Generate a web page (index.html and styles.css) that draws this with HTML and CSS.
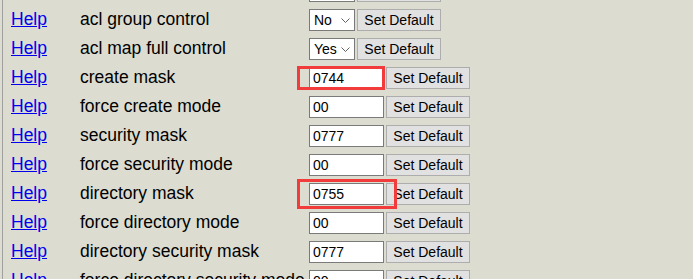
FILE: index.html
```html
<!DOCTYPE html>
<html lang="en">

<head>
  <meta charset="UTF-8" />
  <title>Share Parameters</title>
  <link rel="stylesheet" href="styles.css">
</head>

<body>
  <div class="frame">
    <table class="params">
      <tr>
        <td class="help"></td>
        <td class="name"></td>
        <td class="ctl">
          <span class="dd">
            <select class="pick"><option>Yes</option><option>No</option></select>
            <svg class="chev" width="9" height="5" viewBox="0 0 9 5"><path d="M0.5 0.5 L4.5 4.5 L8.5 0.5" fill="none" stroke="#606060" stroke-width="1"/></svg>
          </span>
          <button class="reset">Set Default</button>
        </td>
      </tr>
      <tr>
        <td class="help"><a href="#">Help</a></td>
        <td class="name">acl group control</td>
        <td class="ctl">
          <span class="dd">
            <select class="pick"><option>No</option><option>Yes</option></select>
            <svg class="chev" width="9" height="5" viewBox="0 0 9 5"><path d="M0.5 0.5 L4.5 4.5 L8.5 0.5" fill="none" stroke="#606060" stroke-width="1"/></svg>
          </span>
          <button class="reset">Set Default</button>
        </td>
      </tr>
      <tr>
        <td class="help"><a href="#">Help</a></td>
        <td class="name">acl map full control</td>
        <td class="ctl">
          <span class="dd">
            <select class="pick"><option>Yes</option><option>No</option></select>
            <svg class="chev" width="9" height="5" viewBox="0 0 9 5"><path d="M0.5 0.5 L4.5 4.5 L8.5 0.5" fill="none" stroke="#606060" stroke-width="1"/></svg>
          </span>
          <button class="reset">Set Default</button>
        </td>
      </tr>
      <tr>
        <td class="help"><a href="#">Help</a></td>
        <td class="name">create mask</td>
        <td class="ctl">
          <input class="val" type="text" value="0744" />
          <button class="reset">Set Default</button>
        </td>
      </tr>
      <tr>
        <td class="help"><a href="#">Help</a></td>
        <td class="name">force create mode</td>
        <td class="ctl">
          <input class="val" type="text" value="00" />
          <button class="reset">Set Default</button>
        </td>
      </tr>
      <tr>
        <td class="help"><a href="#">Help</a></td>
        <td class="name">security mask</td>
        <td class="ctl">
          <input class="val" type="text" value="0777" />
          <button class="reset">Set Default</button>
        </td>
      </tr>
      <tr>
        <td class="help"><a href="#">Help</a></td>
        <td class="name">force security mode</td>
        <td class="ctl">
          <input class="val" type="text" value="00" />
          <button class="reset">Set Default</button>
        </td>
      </tr>
      <tr>
        <td class="help"><a href="#">Help</a></td>
        <td class="name">directory mask</td>
        <td class="ctl">
          <input class="val" type="text" value="0755" />
          <button class="reset">Set Default</button>
        </td>
      </tr>
      <tr>
        <td class="help"><a href="#">Help</a></td>
        <td class="name">force directory mode</td>
        <td class="ctl">
          <input class="val" type="text" value="00" />
          <button class="reset">Set Default</button>
        </td>
      </tr>
      <tr>
        <td class="help"><a href="#">Help</a></td>
        <td class="name">directory security mask</td>
        <td class="ctl">
          <input class="val" type="text" value="0777" />
          <button class="reset">Set Default</button>
        </td>
      </tr>
      <tr>
        <td class="help"><a href="#">Help</a></td>
        <td class="name">force directory security mode</td>
        <td class="ctl">
          <input class="val" type="text" value="00" />
          <button class="reset">Set Default</button>
        </td>
      </tr>
    </table>

    <!-- annotation boxes drawn over the screenshot -->
    <div class="mark mark-create"></div>
    <div class="mark mark-dir"></div>
  </div>
</body>

</html>
```

FILE: styles.css
```css
body {
  margin: 0;
  background-color: #dcdcd0;
  font-family: "Liberation Sans", Arial, sans-serif;
  overflow: hidden;
}

.frame {
  position: relative;
  margin-left: 2px;
  margin-top: -24px;
  border-left: 1px solid #a0a0a0;
  height: 320px;
}

.params {
  border-collapse: collapse;
}

.params td {
  height: 29px;
  padding: 0;
  vertical-align: middle;
  font-size: 17.5px;
  white-space: nowrap;
}

.help {
  width: 69px;
  padding-left: 8px !important;
}

.help a {
  color: #0000ee;
}

.name {
  width: 229px;
  color: #000;
}

.ctl {
  display: flex;
  align-items: center;
  gap: 2px;
  height: 29px;
}

.dd {
  position: relative;
  display: inline-block;
  height: 22px;
}

.pick {
  box-sizing: border-box;
  appearance: none;
  -webkit-appearance: none;
  width: 46px;
  height: 22px;
  font-family: "Liberation Sans", Arial, sans-serif;
  font-size: 14px;
  padding: 0 0 0 4px;
  border: 1px solid #7a7a7a;
  border-radius: 0;
  background-color: #fff;
  color: #000;
}

.chev {
  position: absolute;
  right: 5px;
  top: 9px;
  pointer-events: none;
}

.val {
  box-sizing: border-box;
  width: 75px;
  height: 22px;
  font-family: "Liberation Sans", Arial, sans-serif;
  font-size: 14px;
  padding: 0 3px;
  border: 1px solid #7a7a7a;
  background-color: #fff;
  color: #000;
}

.reset {
  box-sizing: border-box;
  width: 84px;
  height: 22px;
  font-family: "Liberation Sans", Arial, sans-serif;
  font-size: 14px;
  padding: 0;
  background-color: #e1e1e1;
  border: 1px solid #adadad;
  color: #000;
}

.mark {
  position: absolute;
  border: 3px solid #f23c3c;
}

.mark-create {
  left: 294px;
  top: 90px;
  width: 82px;
  height: 18px;
}

.mark-dir {
  left: 294px;
  top: 203px;
  width: 94px;
  height: 24px;
}
```
